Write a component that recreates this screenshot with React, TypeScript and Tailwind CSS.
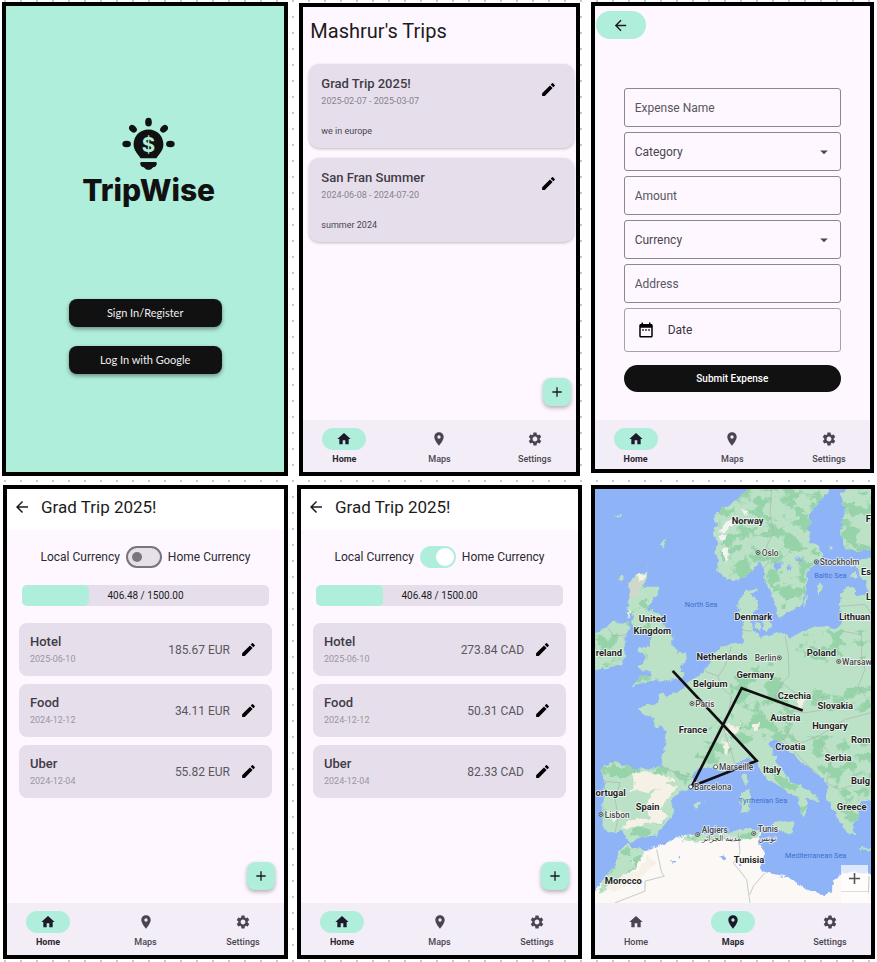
import type { ReactNode } from "react";
import { MdAdd, MdArrowBack, MdArrowDropDown, MdDateRange, MdEdit, MdHome, MdLocationOn, MdSettings } from "react-icons/md";

type Tab = "Home" | "Maps" | "Settings";

const tabs = [
  { name: "Home" as Tab, Icon: MdHome },
  { name: "Maps" as Tab, Icon: MdLocationOn },
  { name: "Settings" as Tab, Icon: MdSettings },
];

function NavBar({ active, compact = false }: { active: Tab; compact?: boolean }) {
  return (
    <nav className={`flex shrink-0 justify-between bg-[#f3edf7] px-[11px] pt-2 ${compact ? "h-[49px]" : "h-[52px]"}`}>
      {tabs.map(({ name, Icon }) => {
        const on = name === active;
        return (
          <button key={name} type="button" className="flex w-[60px] flex-col items-center gap-[2px]">
            <span className={`flex h-[22px] w-11 items-center justify-center rounded-full ${on ? "bg-[#b0eedc] text-[#1d192b]" : "text-[#49454f]"}`}>
              <Icon size={16} />
            </span>
            <span className={`text-[9px] leading-[14px] ${on ? "font-bold text-[#2a2730]" : "font-medium text-[#49454f]"}`}>{name}</span>
          </button>
        );
      })}
    </nav>
  );
}

function Phone({ children, className }: { children: ReactNode; className: string }) {
  return <section className={`flex min-w-0 flex-col overflow-hidden border-4 border-black bg-[#fef7ff] ${className}`}>{children}</section>;
}

function AddButton({ label, className }: { label: string; className: string }) {
  return (
    <button type="button" aria-label={label} className={`mt-auto flex size-7 items-center justify-center self-end rounded-lg bg-[#b0eedc] text-[#1d1b20] shadow-[0_2px_4px_rgba(0,0,0,0.3)] ${className}`}>
      <MdAdd size={16} />
    </button>
  );
}

function Logo() {
  return (
    <div className="flex flex-col items-center pl-[7px] text-[#111]">
      <svg viewBox="366 350 160 162" className="h-[54px] w-[53px]" fill="currentColor" aria-hidden="true">
        <ellipse cx="446" cy="365" rx="10" ry="13" />
        <ellipse cx="380" cy="431" rx="13" ry="10" />
        <ellipse cx="512" cy="431" rx="13" ry="10" />
        <ellipse cx="399" cy="385" rx="13" ry="10" transform="rotate(45 399 385)" />
        <ellipse cx="493" cy="385" rx="13" ry="10" transform="rotate(-45 493 385)" />
        <path d="M446 387c-26 0-45 20-45 45 0 19 12 28 21 42h48c9-14 21-23 21-42 0-25-19-45-45-45z" />
        <path d="M425 485h42c3 0 4 2 4 5 0 7-5 11-11 11-4 5-8 8-14 8s-10-3-14-8c-6 0-11-4-11-11 0-3 1-5 4-5z" />
        <text x="446" y="454" textAnchor="middle" fontSize="62" className="fill-[#b0eedc] font-[Inter,sans-serif] font-bold">$</text>
      </svg>
      <h1 className="mt-px font-[Inter,sans-serif] text-[30px] font-extrabold leading-9">TripWise</h1>
    </div>
  );
}

function WelcomeScreen() {
  const button = "h-7 w-[153px] rounded-lg bg-[#111] font-[Lato,sans-serif] text-[11px] text-[#eee] shadow-[0_2px_4px_rgba(0,0,0,0.4)]";
  return (
    <section className="flex min-h-[474px] min-w-0 flex-col items-center border-4 border-black bg-[#b0eedc] pt-[111px]">
      <Logo />
      <div className="mt-[91px] flex flex-col gap-[19px]">
        <button type="button" className={button}>Sign In/Register</button>
        <button type="button" className={button}>Log In with Google</button>
      </div>
    </section>
  );
}

const trips = [
  { name: "Grad Trip 2025!", dates: "2025-02-07 - 2025-03-07", note: "we in europe" },
  { name: "San Fran Summer", dates: "2024-06-08 - 2024-07-20", note: "summer 2024" },
];

function TripsScreen() {
  return (
    <Phone className="mt-px min-h-[473px]">
      <h2 className="pl-[7px] pt-[10px] text-xl leading-7 text-[#1d1b20]">Mashrur's Trips</h2>
      <ul className="mt-[19px] flex flex-col gap-[10px] pl-[6px] pr-[2px]">
        {trips.map((t) => (
          <li key={t.name} className="flex h-[84px] justify-between rounded-[10px] bg-[#e6dfeb] pl-3 pr-[17px] pt-3 shadow-[0_1px_3px_rgba(0,0,0,0.25)]">
            <div>
              <h3 className="text-[13px] font-medium leading-4 text-[#3f3b45]">{t.name}</h3>
              <p className="mt-[3px] text-[9px] leading-3 text-[#87828c]">{t.dates}</p>
              <p className="mt-[18px] text-[9px] leading-3 text-[#49454f]">{t.note}</p>
            </div>
            <button type="button" aria-label={`Edit ${t.name}`} className="mt-[5px] h-[17px] text-black">
              <MdEdit size={17} />
            </button>
          </li>
        ))}
      </ul>
      <AddButton label="Add trip" className="mb-[14px] mr-[5px]" />
      <NavBar active="Home" />
    </Phone>
  );
}

const fieldBox = "h-[39px] w-full rounded-[3px] border border-[#8b8790] bg-transparent px-[10px] text-[12px] text-[#49454f] placeholder:text-[#5a5660] placeholder:opacity-100";

function TextField({ label }: { label: string }) {
  return <input type="text" aria-label={label} placeholder={label} className={fieldBox} />;
}

function SelectField({ label }: { label: string }) {
  return (
    <div className="relative">
      <select aria-label={label} className={`appearance-none ${fieldBox}`}>
        <option>{label}</option>
      </select>
      <MdArrowDropDown size={18} className="pointer-events-none absolute right-2 top-[11px] text-[#49454f]" />
    </div>
  );
}

function ExpenseScreen() {
  return (
    <Phone className="min-h-[471px]">
      <button type="button" aria-label="Back" className="ml-px mt-[5px] flex h-7 w-[50px] items-center justify-center rounded-full bg-[#b0eedc] text-[#1d1b20]">
        <MdArrowBack size={17} />
      </button>
      <form className="mx-[29px] mb-auto mt-[49px] flex flex-col gap-[5px]">
        <TextField label="Expense Name" />
        <SelectField label="Category" />
        <TextField label="Amount" />
        <SelectField label="Currency" />
        <TextField label="Address" />
        <button type="button" className="flex h-11 items-center gap-[13px] rounded-[3px] border border-[#a5a1aa] pl-[12px] text-[12px] text-[#38343d]">
          <MdDateRange size={18} className="text-black" />
          Date
        </button>
        <button type="button" className="mt-2 h-[27px] rounded-full bg-[#111] text-[10px] font-medium text-white">
          Submit Expense
        </button>
      </form>
      <NavBar active="Home" compact />
    </Phone>
  );
}

type Expense = { name: string; date: string; amount: string };

const local: Expense[] = [
  { name: "Hotel", date: "2025-06-10", amount: "185.67 EUR" },
  { name: "Food", date: "2024-12-12", amount: "34.11 EUR" },
  { name: "Uber", date: "2024-12-04", amount: "55.82 EUR" },
];

const home: Expense[] = [
  { name: "Hotel", date: "2025-06-10", amount: "273.84 CAD" },
  { name: "Food", date: "2024-12-12", amount: "50.31 CAD" },
  { name: "Uber", date: "2024-12-04", amount: "82.33 CAD" },
];

function BudgetScreen({ expenses, homeCurrency }: { expenses: Expense[]; homeCurrency: boolean }) {
  const spent = 406.48;
  const budget = 1500;
  return (
    <Phone className="min-h-[474px]">
      <header className="flex h-[41px] shrink-0 items-center gap-[10px] bg-white pb-[5px] pl-[6px] text-[#1d1b20]">
        <button type="button" aria-label="Back">
          <MdArrowBack size={18} />
        </button>
        <h2 className="text-[17px] leading-6">Grad Trip 2025!</h2>
      </header>
      <label className="mt-4 flex items-center justify-center gap-[6px] text-[12px] leading-4 text-[#2b2930]">
        <span>Local Currency</span>
        <input
          type="checkbox"
          role="switch"
          defaultChecked={homeCurrency}
          aria-label="Show amounts in home currency"
          className="h-[22px] w-9 appearance-none rounded-full border-2 border-[#79747e] bg-[#e6e0e9] p-1 before:block before:size-[10px] before:rounded-full before:bg-[#79747e] checked:border-[#b0eedc] checked:bg-[#b0eedc] checked:p-0 checked:before:ml-[14px] checked:before:size-[18px] checked:before:bg-white"
        />
        <span>Home Currency</span>
      </label>
      <div className="relative mx-[15px] mt-[17px] h-[21px] shrink-0 overflow-hidden rounded-[5px] bg-[#e6dfeb]">
        <div className="h-full rounded-[5px] bg-[#b0eedc]" style={{ width: `${(spent / budget) * 100}%` }} />
        <p className="absolute inset-0 text-center text-[10px] leading-[21px] text-[#1d1b20]">
          {spent.toFixed(2)} / {budget.toFixed(2)}
        </p>
      </div>
      <ul className="mx-3 mt-[17px] flex flex-col gap-2">
        {expenses.map((e) => (
          <li key={e.name} className="flex h-[53px] items-center rounded-lg bg-[#e6dfeb] pl-[11px] pr-[15px]">
            <div className="grow">
              <h3 className="text-[13px] font-medium leading-4 text-[#3f3b45]">{e.name}</h3>
              <p className="mt-[3px] text-[9px] leading-3 text-[#9a95a0]">{e.date}</p>
            </div>
            <span className="text-[12px] text-[#5a5660]">{e.amount}</span>
            <button type="button" aria-label={`Edit ${e.name}`} className="ml-[10px] text-black">
              <MdEdit size={17} />
            </button>
          </li>
        ))}
      </ul>
      <AddButton label="Add expense" className="mb-[13px] mr-[9px]" />
      <NavBar active="Home" />
    </Phone>
  );
}

const countries: [string, number, number][] = [
  ["Norway", 488, 132], ["United", 202, 428], ["Kingdom", 202, 462], ["Denmark", 505, 422], ["Netherlands", 411, 541],
  ["Belgium", 376, 621], ["Germany", 511, 595], ["Poland", 709, 530], ["Czechia", 628, 658], ["Slovakia", 751, 687],
  ["Austria", 601, 725], ["Hungary", 735, 747], ["France", 324, 760], ["Croatia", 616, 812], ["Serbia", 759, 845],
  ["Italy", 561, 881], ["Spain", 188, 991], ["Greece", 800, 992], ["Tunisia", 492, 1151], ["Morocco", 115, 1214],
];

const edgeLabels: [string, number, number, "start" | "end"][] = [
  ["F", 842, 127, "start"], ["Es", 828, 287, "start"], ["L", 843, 361, "start"], ["Lithuan", 762, 421, "start"],
  ["Rom", 798, 789, "start"], ["Bulg", 798, 914, "start"], ["reland", 111, 528, "end"], ["ortugal", 122, 948, "end"],
];

const cities: [string, number, number, number, number, "start" | "end"][] = [
  ["Oslo", 530, 228, 519, 219, "start"], ["Stockholm", 704, 255, 694, 247, "start"], ["Berlin", 574, 543, 583, 535, "end"],
  ["Warsaw", 771, 555, 761, 546, "start"], ["Paris", 331, 681, 321, 672, "start"], ["Marseille", 402, 870, 392, 862, "start"],
  ["Barcelona", 327, 932, 317, 922, "start"], ["Lisbon", 59, 1014, 48, 1005, "start"], ["Algiers", 350, 1059, 338, 1065, "start"],
  ["Tunis", 518, 1057, 506, 1062, "start"], ["مدينة الجزائر", 350, 1084, 338, 1065, "end"], ["تونس", 518, 1084, 506, 1062, "end"],
];

const seas: [string, number, number][] = [
  ["North Sea", 348, 381], ["Baltic Sea", 736, 294], ["Tyrrhenian Sea", 534, 971], ["Mediterranean Sea", 692, 1136],
];

const scandinavia =
  "M505 20L470 42 455 62 430 75 402 95 388 112 396 138 384 168 397 190 388 220 402 242 396 270 410 290 430 303 460 300 490 285 515 262 522 245 535 262 540 300 560 340 572 380 575 410 600 418 605 395 640 385 660 350 665 310 668 275 690 255 715 225 705 200 675 190 672 150 675 100 700 70 722 45 732 20Z";
const finland = "M785 20L768 50 780 90 768 150 772 195 790 212 830 215 880 200 880 20Z";
const britain =
  "M150 285L190 280 188 300 172 322 220 322 218 345 195 375 185 390 215 398 228 410 240 440 262 470 262 495 275 520 303 520 305 545 285 572 297 578 285 597 240 603 215 600 190 610 165 612 135 630 150 610 170 590 200 585 195 575 165 575 158 560 180 545 175 520 160 515 165 500 195 505 195 470 180 455 165 465 150 465 150 440 140 430 147 410 130 400 125 370 140 340 130 320Z";
const ireland = "M20 470L65 440 75 428 100 425 130 432 132 455 118 475 120 510 115 545 90 560 20 574Z";
const continent =
  "M880 232L825 240 815 258 828 290 845 310 845 345 815 350 805 330 785 320 768 345 765 375 768 440 740 450 725 440 700 442 655 455 615 475 590 460 570 460 530 475 505 450 500 430 500 405 520 380 515 360 495 345 515 330 512 322 480 335 460 365 460 400 475 440 470 460 475 488 440 492 405 505 385 525 360 570 330 595 305 610 300 625 280 635 240 650 235 640 220 645 225 670 190 675 160 685 170 705 205 715 215 740 245 755 240 800 230 862 150 868 100 852 60 855 48 875 60 910 55 970 52 1050 85 1060 110 1050 125 1080 135 1092 165 1070 215 1065 240 1030 262 1015 265 990 255 965 290 935 318 925 325 890 340 870 370 860 420 875 450 855 490 835 515 855 545 895 590 925 640 955 650 1000 655 1020 672 980 660 952 700 970 700 955 650 920 620 910 590 870 560 815 550 790 570 780 590 785 600 805 650 850 700 885 725 910 730 960 750 1005 790 1060 812 1070 805 1040 820 1020 825 970 880 960Z";
const islands =
  "M472 885L488 880 490 905 482 920 473 905ZM465 940L490 928 496 960 490 995 468 1000ZM562 1030L630 1022 622 1062 600 1060 565 1042ZM324 975L335 968 345 975 335 985ZM355 962L365 962 362 968ZM825 1102L870 1108 870 1114 830 1110ZM532 430L552 420 562 440 548 456 534 446ZM508 435L526 432 524 448 510 446ZM695 320L712 310 714 328 700 348ZM652 375L665 345 668 348 658 380ZM728 203L745 200 740 210ZM100 300L118 285 112 308ZM790 262L812 250 808 262ZM785 292L812 280 815 292ZM186 260L192 256 190 262ZM228 195L244 175 236 208ZM90 105L108 102 104 115Z";
const africa =
  "M20 1275L40 1220 90 1160 100 1120 125 1092 140 1105 180 1110 225 1098 290 1070 340 1065 440 1060 500 1045 530 1055 520 1090 540 1120 525 1160 545 1180 600 1190 630 1205 650 1222 690 1235 715 1250 740 1240 745 1200 790 1175 880 1190 880 1290 20 1290Z";

function EuropeMap() {
  return (
    <svg viewBox="30 27 828 1245" preserveAspectRatio="xMidYMid slice" className="absolute inset-0 size-full font-[Roboto,sans-serif]" role="img" aria-label="Trip route across Europe">
      <defs>
        <filter id="coast" x="-5%" y="-5%" width="110%" height="110%">
          <feTurbulence type="fractalNoise" baseFrequency="0.05" numOctaves="3" seed="4" result="n" />
          <feDisplacementMap in="SourceGraphic" in2="n" scale="20" xChannelSelector="R" yChannelSelector="G" />
        </filter>
        <filter id="terrain" x="0" y="0" width="100%" height="100%">
          <feTurbulence type="fractalNoise" baseFrequency="0.022 0.028" numOctaves="4" seed="9" />
          <feColorMatrix values="0 0 0 0 0  0 0 0 0 0  0 0 0 0 0  14 0 0 0 -7.1" />
          <feComposite in="SourceGraphic" operator="in" />
        </filter>
        <clipPath id="land">
          <path d={scandinavia} />
          <path d={finland} />
          <path d={britain} />
          <path d={ireland} />
          <path d={continent} />
          <path d={africa} />
        </clipPath>
      </defs>
      <rect x="20" y="20" width="860" height="1270" fill="#8eb3f6" />
      <g filter="url(#coast)">
        <g fill="#bbe2c6">
          <path d={scandinavia} />
          <path d={finland} />
          <path d={britain} />
          <path d={ireland} />
          <path d={continent} />
          <path d={islands} />
        </g>
        <path d={africa} fill="#fbf8f5" />
        <path d="M90 1160L100 1120 125 1092 140 1105 180 1110 172 1135 140 1140 150 1165 110 1190 60 1235 40 1240 50 1205Z" fill="#bbe2c6" />
        <path d="M285 1078L340 1066 440 1060 500 1045 528 1056 515 1075 460 1082 400 1078 330 1090Z" fill="#bbe2c6" />
        <g clipPath="url(#land)">
          <g filter="url(#terrain)" fill="#97d3a9">
            <path d="M400 27H730L670 190 710 225 660 280 660 350 600 400 540 290 430 300 400 200ZM768 27H870V215H768Z" />
            <path d="M120 320L180 330 200 420 180 500 200 610 130 610ZM30 450L90 430 110 560H30Z" />
            <path d="M620 460L860 450 860 560 700 540 620 520ZM430 600L560 540 620 640 600 740 460 740Z" />
            <path d="M50 850L220 860 330 890 300 920 200 890 80 920 60 1050 200 1040 240 1020 200 1070 60 1065Z" />
            <path d="M420 700L640 690 600 780 470 790 400 850 330 860 340 770ZM600 640L860 620V700L700 690Z" />
            <path d="M600 760L860 780V960L780 960 720 890ZM520 840L700 960 650 1000ZM740 960L860 960 810 1060Z" />
            <path d="M40 1235L130 1092 180 1110 150 1165ZM300 1070L520 1050 510 1075 330 1085Z" />
          </g>
        </g>
        <g fill="#f5f1e6">
          <path d="M140 885L180 875 230 885 265 900 240 920 210 930 180 938 135 935 150 910Z" />
          <path d="M205 935L245 915 280 920 250 950 225 990 250 1010 225 1030 180 1030 130 1050 110 1045 150 1015 195 1020 185 975Z" />
          <path d="M75 995L110 1000 90 1025 70 1010ZM152 286L188 282 180 296 160 304ZM430 725L450 745 470 735 450 765 420 760ZM500 735L525 730 520 750 505 755ZM415 780L435 790 430 825 418 820ZM635 662L660 655 655 680 640 684Z" />
          <path d="M60 1225L110 1190 160 1170 190 1130 215 1150 160 1200 90 1240Z" />
        </g>
        <path d="M130 310L160 296 178 310 160 345 135 365Z" fill="#cfd9cb" />
        <g fill="#f3f4f1">
          <path d="M402 160L425 125 460 112 440 140 415 165ZM400 172L428 165 425 182 405 182ZM410 210L430 200 432 225 425 250 415 225ZM465 85L490 95 480 108ZM130 395L136 392 134 415 130 422Z" />
        </g>
        <g fill="#8eb3f6">
          <path d="M562 262L575 245 595 250 585 270 570 275ZM608 262L618 245 614 280ZM630 235L655 238 645 245ZM278 1135L292 1132 288 1140ZM255 1147L268 1144 266 1150ZM405 1132L420 1128 425 1140 412 1142ZM460 1150L468 1148 470 1160Z" />
        </g>
      </g>
      <g fill="none" stroke="#a9b4ae" strokeWidth="2">
        <path d="M560 27L555 100 565 160 545 200 550 250 530 270M70 445L85 470 130 465M470 452L500 455M600 470L610 520 612 590 590 610 630 640 690 660 720 650M765 380L840 375 858 400M770 455L830 465 830 530 840 570 820 620 840 650M360 575L400 590 405 620 440 650 430 700 410 730M440 500L420 560 400 590M590 610L570 650 600 690 660 700 720 690 810 670M560 700L620 740 600 770 650 790 700 770 780 720 858 700M590 775L660 850 700 885M700 780L740 830 725 910 760 930 858 900M230 862L300 890 335 895M60 905L105 910 90 960 100 1010 90 1060M410 730L430 790 450 855M460 1060L465 1120 445 1150 485 1200 495 1270M540 1180L505 1220 495 1245M215 1110L230 1180 238 1190 180 1205 180 1235 90 1270M852 1190L850 1240" />
      </g>
      <path d="M263 574L515 844 320 921 470 626 653 693" fill="none" stroke="#101010" strokeWidth="8" strokeLinejoin="miter" />
      <g stroke="#fff" strokeOpacity="0.75" strokeWidth="5" strokeLinejoin="round" paintOrder="stroke">
        {cities.map(([name, x, y, cx, cy, anchor]) => {
          const arabic = /[\u0600-\u06ff]/.test(name);
          const capital = name !== "Marseille" && name !== "Barcelona";
          return (
            <g key={name}>
              {!arabic && <circle cx={cx} cy={cy} r="6" fill="#fff" stroke="#555" strokeOpacity="1" strokeWidth="3" paintOrder="normal" />}
              {!arabic && capital && <circle cx={cx} cy={cy} r="3" fill="#444" stroke="none" />}
              <text x={x} y={y} textAnchor={anchor} direction={arabic ? "rtl" : "ltr"} fontSize={arabic ? 24 : 25} fill="#444" fontWeight="500">
                {name}
              </text>
            </g>
          );
        })}
        {countries.map(([name, x, y]) => (
          <text key={name} x={x} y={y} textAnchor="middle" fontSize="28" fontWeight="700" fill="#1f1f1f">
            {name}
          </text>
        ))}
        {edgeLabels.map(([name, x, y, anchor]) => (
          <text key={name} x={x} y={y} textAnchor={anchor} fontSize="28" fontWeight="700" fill="#1f1f1f">
            {name}
          </text>
        ))}
      </g>
      {seas.map(([name, x, y]) => (
        <text key={name} x={x} y={y} textAnchor="middle" fontSize="22" fill="#3f6fd0">
          {name}
        </text>
      ))}
    </svg>
  );
}

function MapScreen() {
  return (
    <Phone className="min-h-[474px]">
      <div className="relative grow overflow-hidden">
        <EuropeMap />
        <div className="absolute bottom-0 right-[3px] flex h-[38px] w-[27px] flex-col divide-y divide-[#dcdcdc] bg-white/70">
          <button type="button" aria-label="Zoom in" className="flex h-[27px] items-center justify-center text-[#555]">
            <MdAdd size={19} />
          </button>
          <span className="grow" />
        </div>
      </div>
      <NavBar active="Maps" />
    </Phone>
  );
}

export default function App() {
  return (
    <main className="min-h-screen bg-white bg-[radial-gradient(#c6c8d8_1px,transparent_1px)] bg-[position:-3px_-7px] bg-[size:16px_16px] pt-[2px] font-[Roboto,sans-serif]">
      <div className="grid grid-cols-[286fr_280fr_283fr] items-start gap-x-[11px] pl-[2px] pr-[3px]">
        <WelcomeScreen />
        <TripsScreen />
        <ExpenseScreen />
      </div>
      <div className="mt-[9px] grid grid-cols-[285fr_285fr_284fr] gap-x-[9px] pl-[3px] pr-[2px]">
        <BudgetScreen expenses={local} homeCurrency={false} />
        <BudgetScreen expenses={home} homeCurrency />
        <MapScreen />
      </div>
    </main>
  );
}
